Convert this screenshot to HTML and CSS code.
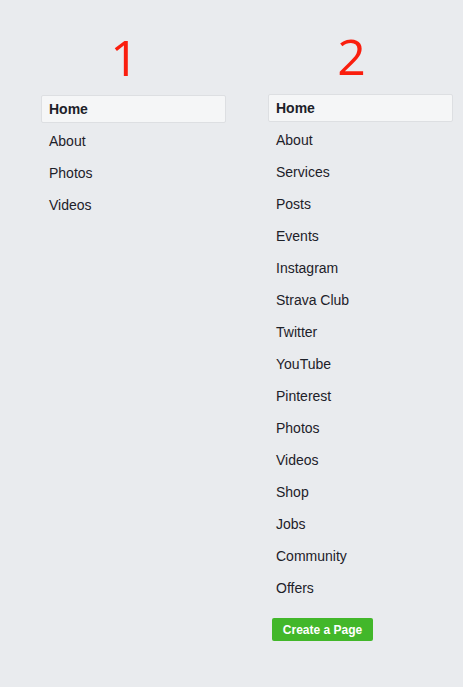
FILE: index.html
```html
<!DOCTYPE html>
<html lang="en">
<head>
<meta charset="UTF-8" />
<meta name="viewport" content="width=device-width, initial-scale=1" />
<title>Page menus</title>
<link rel="stylesheet" href="styles.css">
</head>
<body>
  <main class="compare">
    <section class="variant">
      <div class="variant-num">1</div>
      <ul class="side-menu">
        <li class="menu-item active">Home</li>
        <li class="menu-item">About</li>
        <li class="menu-item">Photos</li>
        <li class="menu-item">Videos</li>
      </ul>
    </section>

    <section class="variant variant-2">
      <div class="variant-num">2</div>
      <ul class="side-menu">
        <li class="menu-item active">Home</li>
        <li class="menu-item">About</li>
        <li class="menu-item">Services</li>
        <li class="menu-item">Posts</li>
        <li class="menu-item">Events</li>
        <li class="menu-item">Instagram</li>
        <li class="menu-item">Strava Club</li>
        <li class="menu-item">Twitter</li>
        <li class="menu-item">YouTube</li>
        <li class="menu-item">Pinterest</li>
        <li class="menu-item">Photos</li>
        <li class="menu-item">Videos</li>
        <li class="menu-item">Shop</li>
        <li class="menu-item">Jobs</li>
        <li class="menu-item">Community</li>
        <li class="menu-item">Offers</li>
      </ul>
      <button class="create-btn" type="button">Create a Page</button>
    </section>
  </main>
</body>
</html>
```

FILE: styles.css
```css
/* Temel */
*,
*::before,
*::after {
  box-sizing: border-box;
}

body {
  margin: 0;
  font-family: 'Liberation Sans', Arial, sans-serif;
  color: #1d2129;
  background-color: #e9ebee;
  min-height: 687px;
}

/* Iki sutun */
.compare {
  display: grid;
  grid-template-columns: 185px 185px;
  column-gap: 42px;
  padding: 27px 0 0 41px;
}

.variant-2 {
  margin-top: -1px;
}

.variant-num {
  font-family: 'Open Sans', sans-serif;
  font-weight: 400;
  font-size: 50px;
  line-height: 60px;
  color: #fa1e0e;
  text-align: center;
  padding-right: 18px;
  margin-bottom: 8px;
}

/* Menu */
.side-menu {
  list-style: none;
  margin: 0;
  padding: 0;
  display: flex;
  flex-direction: column;
  gap: 4px;
}

.menu-item {
  height: 28px;
  line-height: 26px;
  padding: 0 7px;
  font-size: 14px;
  border: 1px solid transparent;
  border-radius: 2px;
}

.menu-item.active {
  background-color: #f5f6f7;
  border-color: #dddfe2;
  font-weight: bold;
}

/* Buton */
.create-btn {
  margin: 16px 0 0 4px;
  width: 101px;
  height: 23px;
  padding: 0;
  border: none;
  border-radius: 2px;
  background-color: #42b72a;
  color: #fff;
  font-family: 'Liberation Sans', Arial, sans-serif;
  font-size: 12px;
  font-weight: bold;
}
```
